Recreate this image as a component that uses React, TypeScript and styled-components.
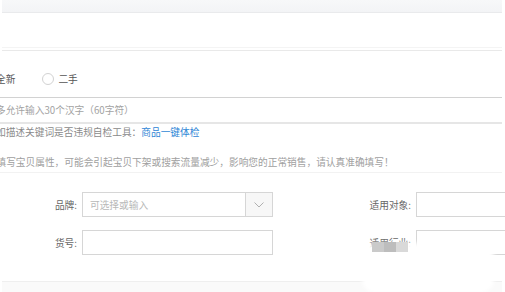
import React from "react";
import styled, { createGlobalStyle } from "styled-components";

const Global = createGlobalStyle`
  html, body { margin: 0; padding: 0; background: #fff; }
  body {
    width: 505px; height: 292px; overflow: hidden;
    font-family: "Noto Sans CJK SC", "Noto Sans", sans-serif;
    font-size: 9.7px;
    color: #666;
  }
  #root { position: relative; width: 505px; height: 292px; overflow: hidden; }
`;

const Page = styled.div`
  position: relative;
  width: 505px;
  height: 292px;
  overflow: hidden;
`;

const TopBar = styled.div`
  margin: 0 3px 0 2px;
  height: 12px;
  background: linear-gradient(#f7f8f9, #f3f4f6);
  border-bottom: 1px solid #e9eaec;
`;

const SectionSplit = styled.div`
  margin: 34px 3px 0 2px;
  height: 2px;
  border-top: 1px solid #f4f4f4;
  border-bottom: 1px solid #e9e9e9;
`;

const Content = styled.div`
  margin-left: -4px;
  width: 506px;
`;

const RadioRow = styled.div`
  margin-top: 20px;
  height: 16px;
  display: flex;
  align-items: center;
`;

const RadioOption = styled.label<{ $gap?: number }>`
  display: flex;
  align-items: center;
  gap: 4px;
  color: #555;
  margin-left: ${(p) => p.$gap ?? 0}px;
`;

const RadioCircle = styled.span`
  width: 12px;
  height: 12px;
  border-radius: 50%;
  border: 1px solid #d2d2d2;
  background: #fff;
  box-sizing: border-box;
`;

const TitleInput = styled.div`
  margin-top: 10px;
  height: 24px;
  border-top: 1px solid #d2d2d2;
  border-bottom: 2px solid #e6e6e6;
  display: flex;
  align-items: center;
  color: #a3a3a3;
`;

const HintLine = styled.div`
  margin-top: 1px;
  height: 14px;
  line-height: 14px;
  color: #8a8a8a;
`;

const Link = styled.a`
  color: #2f86d6;
  text-decoration: none;
`;

const Warning = styled.div`
  margin-top: 16px;
  height: 14px;
  line-height: 14px;
  color: #a0a0a0;
  padding-left: 0.5px;
`;

const FaintLine = styled.div`
  margin-top: 3px;
  border-top: 1px solid #f2f2f2;
`;

const Form = styled.div`
  margin-top: 19px;
  display: flex;
  flex-direction: column;
  gap: 13px;
`;

const FormRow = styled.div`
  display: grid;
  grid-template-columns: 81px 191px 133px 130px;
  column-gap: 5px;
  align-items: center;
  height: 25px;
`;

const Label = styled.span`
  text-align: right;
  color: #666;
  white-space: nowrap;
`;

const Field = styled.div`
  height: 25px;
  border: 1px solid #d6d6d6;
  box-sizing: border-box;
  background: #fff;
  display: flex;
  align-items: stretch;
`;

const Placeholder = styled.span`
  flex: 1;
  display: flex;
  align-items: center;
  padding-left: 7px;
  color: #b8b8b8;
`;

const DropButton = styled.span`
  width: 26px;
  border-left: 1px solid #d6d6d6;
  background: #f7f7f7;
  display: flex;
  align-items: center;
  justify-content: center;
`;

const Footer = styled.div`
  margin: 26px 3px 0 2px;
  height: 11px;
  border-top: 1px solid #efefef;
  background: #fafafa;
`;

const Watermark = styled.div`
  position: absolute;
  left: 362px;
  top: 243px;
  width: 132px;
  height: 50px;
  background: #fff;
  border-radius: 14px;
  filter: blur(2px);
`;

const Mosaic = styled.div`
  position: absolute;
  left: 372px;
  top: 242px;
  display: flex;
`;

const Tile = styled.span<{ $c: string }>`
  width: 12px;
  height: 10px;
  background: ${(p) => p.$c};
`;

const Chevron = () => (
  <svg width="10" height="6" viewBox="0 0 10 6">
    <polyline points="0.5,0.5 5,5 9.5,0.5" fill="none" stroke="#b0b0b0" strokeWidth="1" />
  </svg>
);

export default function App() {
  return (
    <Page>
      <Global />
      <TopBar />
      <SectionSplit />
      <Content>
        <RadioRow>
          <RadioOption>全新</RadioOption>
          <RadioOption $gap={27}>
            <RadioCircle />
            二手
          </RadioOption>
        </RadioRow>
        <TitleInput>多允许输入30个汉字（60字符）</TitleInput>
        <HintLine>
          如描述关键词是否违规自检工具：<Link>商品一键体检</Link>
        </HintLine>
        <Warning>填写宝贝属性，可能会引起宝贝下架或搜索流量减少，影响您的正常销售，请认真准确填写！</Warning>
        <FaintLine />
        <Form>
          <FormRow>
            <Label>品牌:</Label>
            <Field>
              <Placeholder>可选择或输入</Placeholder>
              <DropButton>
                <Chevron />
              </DropButton>
            </Field>
            <Label>适用对象:</Label>
            <Field />
          </FormRow>
          <FormRow>
            <Label>货号:</Label>
            <Field />
            <Label>适用行业:</Label>
            <Field />
          </FormRow>
        </Form>
      </Content>
      <Footer />
      <Watermark />
      <Mosaic>
        <Tile $c="#cacaca" />
        <Tile $c="#bdbdbd" />
        <Tile $c="#d9d9d9" />
      </Mosaic>
    </Page>
  );
}
